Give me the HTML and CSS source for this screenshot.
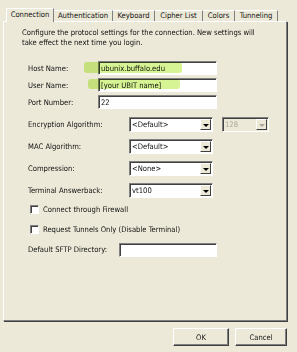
FILE: index.html
```html
<!DOCTYPE html>
<html lang="en">
<head>
    <meta charset="UTF-8">
    <title>Connection Settings</title>
    <link rel="stylesheet" href="styles.css">
</head>
<body>

<div class="dialog">
    <div class="tabs">
        <div class="tab active">Connection</div>
        <div class="tab t-auth">Authentication</div>
        <div class="tab t-key">Keyboard</div>
        <div class="tab t-cipher">Cipher List</div>
        <div class="tab t-colors">Colors</div>
        <div class="tab t-tunnel">Tunneling</div>
    </div>

    <div class="panel">
        <p class="intro">Configure the protocol settings for the connection. New settings will<br>take effect the next time you login.</p>

        <div class="row first">
            <span class="label short">Host Name:</span>
            <span class="field host">ubunix.buffalo.edu</span>
        </div>
        <div class="row">
            <span class="label short">User Name:</span>
            <span class="field host">[your UBIT name]</span>
        </div>
        <div class="row">
            <span class="label short">Port Number:</span>
            <span class="field host">22</span>
        </div>

        <div class="row sel-row first-sel">
            <span class="label long">Encryption Algorithm:</span>
            <span class="select"><span class="value">&lt;Default&gt;</span><span class="arrow"></span></span>
            <span class="select small disabled"><span class="value">128</span><span class="arrow"></span></span>
        </div>
        <div class="row sel-row">
            <span class="label long">MAC Algorithm:</span>
            <span class="select"><span class="value">&lt;Default&gt;</span><span class="arrow"></span></span>
        </div>
        <div class="row sel-row">
            <span class="label long">Compression:</span>
            <span class="select"><span class="value">&lt;None&gt;</span><span class="arrow"></span></span>
        </div>
        <div class="row sel-row">
            <span class="label long">Terminal Answerback:</span>
            <span class="select"><span class="value">vt100</span><span class="arrow"></span></span>
        </div>

        <div class="row check-row first-check">
            <span class="checkbox"></span>
            <span>Connect through Firewall</span>
        </div>
        <div class="row check-row">
            <span class="checkbox"></span>
            <span>Request Tunnels Only (Disable Terminal)</span>
        </div>

        <div class="row sftp-row">
            <span class="label sftp">Default SFTP Directory:</span>
            <span class="field sftp-field"></span>
        </div>
    </div>

    <div class="actions">
        <button class="btn">OK</button>
        <button class="btn">Cancel</button>
    </div>

    <!-- marker highlights -->
    <div class="mark mark-host"></div>
    <div class="mark mark-user"></div>
</div>

</body>
</html>
```

FILE: styles.css
```css
body {
    margin: 0;
    background-color: #ece9d8;
    font-family: Tahoma, "DejaVu Sans Condensed", "Liberation Sans", sans-serif;
    font-size: 7.6px;
    color: #111;
}

.dialog {
    position: relative;
    width: 297px;
    height: 352px;
    padding: 8px 0 0 3px;
    box-sizing: border-box;
}

/* tab strip */
.tabs {
    display: flex;
    align-items: flex-end;
    height: 13px;
    padding-left: 3px;
    position: relative;
    z-index: 2;
}

.tab {
    height: 11px;
    line-height: 10px;
    text-align: center;
    box-sizing: border-box;
    border-top: 1px solid #fff;
    border-right: 1px solid #808080;
    background-color: #ece9d8;
}

.tab.active {
    width: 48px;
    height: 14px;
    line-height: 12px;
    margin-bottom: -1px;
    border-left: 1px solid #fff;
    border-right: 1px solid #808080;
}

.t-auth { width: 59px; }
.t-key { width: 42px; }
.t-cipher { width: 48px; }
.t-colors { width: 32px; }
.t-tunnel { width: 43px; }

/* page panel */
.panel {
    width: 284px;
    height: 300px;
    box-sizing: border-box;
    border-top: 1px solid #fff;
    border-left: 1px solid #fff;
    border-right: 1px solid #808080;
    border-bottom: 1px solid #808080;
    box-shadow: 1px 1px 0 #404040;
    padding: 6px 0 0 18px;
}

.intro {
    margin: 0;
    line-height: 10px;
    height: 20px;
}

.row {
    display: flex;
    align-items: center;
    height: 14px;
    margin-top: 3px;
    margin-left: 6px;
}

.row.first {
    margin-top: 13px;
}

.label {
    flex-shrink: 0;
}

.label.short { width: 70px; }
.label.long { width: 101px; }
.label.sftp { width: 91px; }

.field {
    display: block;
    height: 14px;
    box-sizing: border-box;
    background-color: #fff;
    border-top: 1px solid #808080;
    border-left: 1px solid #808080;
    border-right: 1px solid #fff;
    border-bottom: 1px solid #fff;
    box-shadow: inset 1px 1px 0 #404040;
    padding: 1px 0 0 2px;
    line-height: 11px;
}

.field.host { width: 119px; }
.field.sftp-field { width: 98px; }

/* dropdowns */
.sel-row { margin-top: 8px; }
.sel-row.first-sel { margin-top: 8px; }

.select {
    display: flex;
    width: 84px;
    height: 15px;
    box-sizing: border-box;
    background-color: #fff;
    border-top: 1px solid #808080;
    border-left: 1px solid #808080;
    border-right: 1px solid #fff;
    border-bottom: 1px solid #fff;
    box-shadow: inset 1px 1px 0 #404040;
}

.select .value {
    flex: 1;
    padding: 1px 0 0 2px;
    line-height: 11px;
}

.select .arrow {
    position: relative;
    width: 11px;
    margin: 1px 1px 1px 0;
    background-color: #ece9d8;
    box-sizing: border-box;
    border-top: 1px solid #fff;
    border-left: 1px solid #fff;
    border-right: 1px solid #404040;
    border-bottom: 1px solid #404040;
}

.select .arrow::after {
    content: "";
    position: absolute;
    left: 2px;
    top: 4px;
    border-left: 3px solid transparent;
    border-right: 3px solid transparent;
    border-top: 3px solid #000;
}

.select.small {
    width: 47px;
    margin-left: 9px;
}

.select.disabled {
    background-color: #ece9d8;
    color: #aca899;
}

.select.disabled .arrow::after {
    border-top-color: #aca899;
}

/* checkboxes */
.check-row {
    height: 12px;
    margin-top: 8px;
    margin-left: 8px;
}

.check-row.first-check {
    margin-top: 6px;
}

.checkbox {
    width: 9px;
    height: 9px;
    box-sizing: border-box;
    margin-right: 4px;
    background-color: #fff;
    border-top: 1px solid #808080;
    border-left: 1px solid #808080;
    border-right: 1px solid #fff;
    border-bottom: 1px solid #fff;
    box-shadow: inset 1px 1px 0 #404040;
}

.sftp-row {
    height: 13px;
    margin-top: 8px;
}

/* buttons */
.actions {
    display: flex;
    justify-content: flex-end;
    gap: 6px;
    width: 284px;
    margin-top: 7px;
}

.btn {
    width: 56px;
    height: 18px;
    padding: 0;
    font-family: inherit;
    font-size: 7.6px;
    color: #111;
    background-color: #ece9d8;
    border-top: 1px solid #fff;
    border-left: 1px solid #fff;
    border-right: 1px solid #404040;
    border-bottom: 1px solid #404040;
    box-shadow: inset -1px -1px 0 #808080;
}

.btn:last-child {
    width: 52px;
}

/* green marker strokes over the two fields */
.mark {
    position: absolute;
    background-color: #d6f493;
    mix-blend-mode: multiply;
    border-radius: 3px;
    filter: blur(0.6px);
}

.mark-host {
    left: 84px;
    top: 62px;
    width: 98px;
    height: 11px;
}

.mark-user {
    left: 88px;
    top: 79px;
    width: 92px;
    height: 10px;
}
```
